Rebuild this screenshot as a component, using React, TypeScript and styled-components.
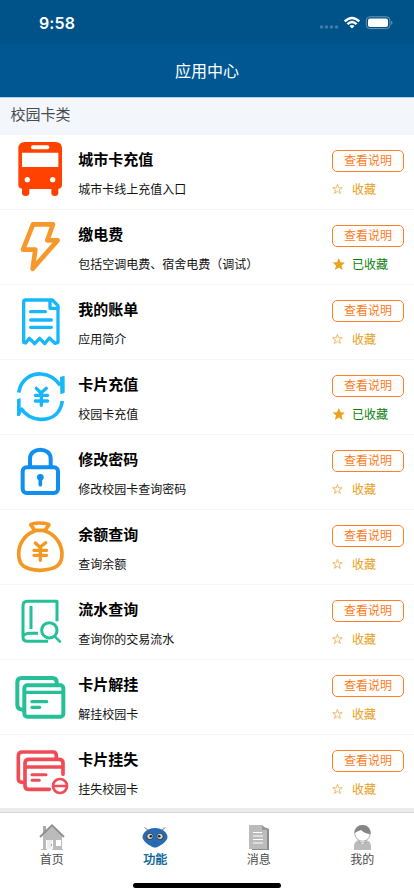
import React from 'react';
import styled, { createGlobalStyle } from 'styled-components';

const GlobalStyle = createGlobalStyle`
  * { box-sizing: border-box; }
  body { margin: 0; background: #fff; overflow: hidden; font-family: "Noto Sans CJK SC", sans-serif; }
`;

const Screen = styled.div`
  width: 414px;
  height: 896px;
  display: flex;
  flex-direction: column;
  overflow: hidden;
  background: #fff;
`;

const StatusBar = styled.div`
  height: 44px;
  flex: none;
  display: flex;
  justify-content: space-between;
  padding: 0 20px 0 39px;
  background: #005388;
`;

const Clock = styled.span`
  padding-top: 13px;
  font-family: Inter, sans-serif;
  font-size: 16px;
  line-height: 20px;
  font-weight: 600;
  letter-spacing: 0.1px;
  color: #fff;
`;

const StatusIcons = styled.svg`
  width: 78px;
  height: 44px;
`;

const Header = styled.header`
  height: 53px;
  flex: none;
  display: flex;
  align-items: center;
  justify-content: center;
  padding-bottom: 2px;
  background: #005792;
  color: #fff;
  font-size: 16px;
  font-weight: 400;
  line-height: 24px;
`;

const Section = styled.div`
  height: 38px;
  flex: none;
  padding: 5px 10.5px;
  border-top: 1px solid #b5cde0;
  background: #f3f7fb;
  color: #484b4e;
  font-size: 15px;
  line-height: 22px;
`;

const List = styled.main`
  height: 673px;
  flex: none;
  overflow: hidden;
`;

const Row = styled.div`
  height: 75px;
  display: flex;
  border-bottom: 1px solid #f5f5f5;
`;

const RowIcon = styled.svg`
  width: 70px;
  height: 75px;
  flex: none;
`;

const Info = styled.div`
  flex: 1;
  padding: 13px 0 0 8.2px;
`;

const Title = styled.div`
  font-size: 15px;
  line-height: 22px;
  font-weight: 700;
  color: #000;
`;

const Desc = styled.div`
  margin-top: 10px;
  font-size: 12px;
  line-height: 18px;
  color: #111;
`;

const Actions = styled.div`
  width: 82px;
  padding-top: 15px;
`;

const HelpButton = styled.button`
  display: block;
  width: 72px;
  height: 22px;
  padding: 0 0 2px;
  border: 1px solid #ff7f27;
  border-radius: 5px;
  background: #fff;
  color: #ff7a1c;
  font: inherit;
  font-size: 12px;
  line-height: 18px;
`;

const Favorite = styled.div<{ $on?: boolean }>`
  display: flex;
  align-items: center;
  gap: 7px;
  margin-top: 8px;
  font-size: 12px;
  line-height: 18px;
  color: ${(p) => (p.$on ? '#0a800a' : '#e8a020')};
`;

const Star = styled.svg`
  width: 13px;
  height: 13px;
`;

const TabBar = styled.nav`
  flex: none;
  height: 65px;
  display: flex;
  border-top: 4px solid #ebebeb;
`;

const Tab = styled.div<{ $active?: boolean }>`
  flex: 1;
  display: flex;
  flex-direction: column;
  align-items: center;
  padding-top: 10px;
  border-top: 1px solid #d5d5d5;
  font-size: 12px;
  line-height: 18px;
  -webkit-text-stroke: ${(p) => (p.$active ? '0.35px' : '0')};
  color: ${(p) => (p.$active ? '#005c96' : '#4a4a4a')};
`;

const TabIcon = styled.svg`
  width: 28px;
  height: 28px;
  margin-bottom: -1px;
`;

const HomeIndicator = styled.div`
  width: 148px;
  height: 5px;
  margin: 9.5px auto 0;
  border-radius: 3px;
  background: #000;
`;

type Kind = 'bus' | 'bolt' | 'bill' | 'cycle' | 'lock' | 'bag' | 'book' | 'cards' | 'lost';

const tints: Record<Kind, string> = {
  bus: '#ff4200', bolt: '#f7982a', bill: '#18b7fb', cycle: '#18b7fb', lock: '#118ff0',
  bag: '#f39823', book: '#25bf98', cards: '#25bf98', lost: '#f04c55',
};

const offsets: Record<Kind, number> = {
  bus: 15, bolt: 240, bill: 0, cycle: 225, lock: 0, bag: 225, book: 0, cards: 225, lost: 0,
};

const drawings: Record<Kind, React.ReactNode> = {
  bus: (
    <g stroke="none">
      <path fill="#ff4200" d="M75 36H167Q186 36 186 56V164Q186 175 175 176V189Q175 198 165 198Q154 198 154 189V177H88V189Q88 198 77 198Q66 198 66 189V176Q55 174 55 164V56Q55 36 75 36Z" />
      <rect x="93" y="46" width="55" height="12" rx="6" fill="#fff" />
      <rect x="66" y="68" width="109" height="43" rx="1" fill="#fff" />
      <circle cx="82" cy="149" r="8" fill="#fff" />
      <circle cx="158" cy="149" r="8" fill="#fff" />
    </g>
  ),
  bolt: <path strokeWidth="14" d="M99 283H159L142 331H173L98 416L106 359H69Z" />,
  bill: (
    <g strokeWidth="10">
      <path d="M71 172V51Q71 45 77 45H157L174 62V172L165 175L148 159L134 176L119 160L104 176L88 160L77 174Z" />
      <path d="M150 46V70H174" />
      <path strokeWidth="10" d="M92 80H136M92 105H154M92 127H154" />
    </g>
  ),
  cycle: (
    <g strokeWidth="10">
      <path strokeLinecap="butt" strokeWidth="11" d="M56 323C64 276 101 265 124 267C149 269 168 283 181 301M187 348C180 394 147 404 121 403C94 402 75 388 62 369" />
      <path fill="#18b7fb" strokeWidth="4" d="M182 277L192 275V322L183 325ZM53 344L60 342V370L65 376L58 391H53Z" />
      <path d="M109 310L123 324L139 310M124 326V361M106 331H143M106 348H143" />
    </g>
  ),
  lock: (
    <g strokeWidth="12">
      <rect x="68" y="97" width="106" height="77" rx="12" />
      <path d="M90 96V71C90 35 152 35 152 71V96" />
      <circle cx="121" cy="127" r="10" fill="#118ff0" stroke="none" />
      <path strokeWidth="11" d="M121 129V149" />
    </g>
  ),
  bag: (
    <g strokeWidth="11">
      <path d="M92 269Q92 264 119 264Q147 264 147 269L135 286H104Z" />
      <path d="M104 288C73 299 56 328 56 356C56 390 73 404 120 406C169 404 187 390 186 354C184 323 164 298 135 288" />
      <path strokeWidth="10" d="M106 324L120 337L137 323M121 338V376M102 346H140M102 361H140" />
    </g>
  ),
  book: (
    <g strokeWidth="9" strokeLinecap="butt">
      <path d="M171 109V49H82Q69 49 69 63V157Q69 169 83 169H144" />
      <path d="M93 63V132M70 152Q75 146 86 145H114" />
      <circle cx="148" cy="136" r="23" />
      <path strokeWidth="8" d="M164 154L182 172" />
    </g>
  ),
  cards: (
    <g strokeWidth="12">
      <path d="M170 296V292Q170 279 157 279H65Q52 279 52 292V360Q52 373 68 374" />
      <rect x="73" y="301" width="117" height="94" rx="9" />
      <path strokeWidth="10" d="M74 322H190M96 350H140M96 367H119" />
    </g>
  ),
  lost: (
    <g strokeWidth="11">
      <path d="M169 70V62Q169 51 159 51H67Q55 51 55 63V132Q55 142 68 142" />
      <path d="M189 118V84Q189 73 177 73H87Q75 73 75 85V152Q75 163 87 163H148M76 96H188" />
      <path strokeWidth="9" d="M96 119H138M96 136H118" />
      <circle cx="180" cy="153" r="21" strokeWidth="8" />
      <path strokeWidth="8" d="M162 153H198" />
    </g>
  ),
};

const items: { kind: Kind; title: string; desc: string; on?: boolean }[] = [
  { kind: 'bus', title: '城市卡充值', desc: '城市卡线上充值入口' },
  { kind: 'bolt', title: '缴电费', desc: '包括空调电费、宿舍电费（调试）', on: true },
  { kind: 'bill', title: '我的账单', desc: '应用简介' },
  { kind: 'cycle', title: '卡片充值', desc: '校园卡充值', on: true },
  { kind: 'lock', title: '修改密码', desc: '修改校园卡查询密码' },
  { kind: 'bag', title: '余额查询', desc: '查询余额' },
  { kind: 'book', title: '流水查询', desc: '查询你的交易流水' },
  { kind: 'cards', title: '卡片解挂', desc: '解挂校园卡' },
  { kind: 'lost', title: '卡片挂失', desc: '挂失校园卡' },
];

const StarIcon = ({ on }: { on?: boolean }) => (
  <Star viewBox="0 0 13 13">
    {on ? (
      <path fill="#eba21c" d="M6.8 0L8.6 4.3L13 4.6L9.6 7.6L10.7 12L6.8 9.6L2.9 12L4 7.6L.6 4.6L5 4.3Z" />
    ) : (
      <path fill="none" stroke="#eba63a" strokeWidth=".75" d="M5.4 1.4L6.6 4.8H10.2L7.3 6.9L8.4 10.4L5.4 8.3L2.4 10.4L3.5 6.9L.6 4.8H4.2Z" />
    )}
  </Star>
);

const tabs = [
  {
    label: '首页',
    icon: (
      <>
        <path fill="#bbb" d="M5 12L14 3L24 13V27H5Z" />
        <path fill="#aaa" d="M5 3H8V10H5Z" />
        <path fill="#fff" d="M8 17H15V27H8ZM18 17H23V23H18Z" />
        <path fill="#bcbcbc" d="M9 17H14V26H9Z" opacity=".25" />
        <circle cx="13.4" cy="22" r=".8" fill="#888" />
        <path stroke="#bbb" d="M3 26.5H9M14 26.5H25" />
        <path fill="none" stroke="#8c8c8c" strokeWidth="1.8" d="M2 14L14 2.2L26 14" />
      </>
    ),
  },
  {
    label: '功能',
    active: true,
    icon: (
      <>
        <path fill="none" stroke="#68717c" strokeWidth=".9" d="M7 7L3.5 4.5M21 7L24.5 4.5" />
        <path fill="#286bb4" d="M14 5C21 5 26.5 9.5 26.5 14C26.5 18 20 22.5 16.5 24Q14 25 11.5 24C8 22.5 1.5 18 1.5 14C1.5 9.5 7 5 14 5Z" />
        <circle cx="8.7" cy="13.4" r="3.5" fill="#41494b" />
        <circle cx="19.3" cy="13.4" r="3.5" fill="#41494b" />
        <circle cx="9" cy="13.3" r="2.6" fill="#d3d9ce" />
        <circle cx="19" cy="13.3" r="2.6" fill="#d3d9ce" />
        <circle cx="9.8" cy="13.3" r="1.3" fill="#222" />
        <circle cx="18.2" cy="13.3" r="1.3" fill="#222" />
        <circle cx="14" cy="19.7" r=".5" fill="#234e82" />
      </>
    ),
  },
  {
    label: '消息',
    icon: (
      <>
        <path fill="#8c8c8c" d="M17 3L24 6V27H7V24H20Z" />
        <path fill="#bbb" d="M4 2H17L22 7V26H4Z" />
        <path fill="#999" d="M17 2V7H22Z" />
        <path stroke="#fff" d="M8 9.5H17M8 13H18M8 16.5H18M8 20H18" />
      </>
    ),
  },
  {
    label: '我的',
    icon: (
      <>
        <path fill="#bbb" d="M6 27Q5 18 11 17H18Q24 18 23 27Z" />
        <path fill="#fff" d="M11 18L14.5 21L18 18Z" />
        <path fill="#aaa" d="M11 18L14.5 20L18 18V21L14.5 19L11 21Z" />
        <circle cx="14.5" cy="10.5" r="7.7" fill="#fff" stroke="#999" strokeWidth=".8" />
        <path fill="#858585" d="M6.5 10C6.5 5 10 2 14.5 2C19 2 23 5 22.6 11Q17 11 13 7Q10 8 6.5 10Z" />
      </>
    ),
  },
];

export default function App() {
  return (
    <Screen>
      <GlobalStyle />
      <StatusBar>
        <Clock>9:58</Clock>
        <StatusIcons viewBox="0 0 78 44">
          <g fill="#427ca5">
            <circle cx="5.5" cy="27" r="1.8" />
            <circle cx="10.5" cy="27" r="1.8" />
            <circle cx="15.5" cy="27" r="1.8" />
            <circle cx="20.5" cy="27" r="1.8" />
          </g>
          <g fill="none" stroke="#fff" strokeWidth="2.4">
            <path d="M28.7 21.4Q36 14.6 43.3 21.4" />
            <path d="M31.4 24.2Q36 19.9 40.6 24.2" />
          </g>
          <path fill="#fff" d="M33.5 26.1Q36 24 38.5 26.1L36 28.6Z" />
          <rect x="50.3" y="16.8" width="23.6" height="11.8" rx="3.5" fill="none" stroke="#7295b0" />
          <rect x="52" y="18.5" width="20" height="8.5" rx="2" fill="#fff" />
          <path fill="#7295b0" d="M75.2 20.8Q78 22.7 75.2 25Z" />
        </StatusIcons>
      </StatusBar>
      <Header>应用中心</Header>
      <Section>校园卡类</Section>
      <List>
        {items.map((item) => (
          <Row key={item.kind}>
            <RowIcon
              viewBox={`0 ${offsets[item.kind]} 210 225`}
              fill="none"
              stroke={tints[item.kind]}
              strokeLinecap="round"
              strokeLinejoin="round"
            >
              {drawings[item.kind]}
            </RowIcon>
            <Info>
              <Title>{item.title}</Title>
              <Desc>{item.desc}</Desc>
            </Info>
            <Actions>
              <HelpButton>查看说明</HelpButton>
              <Favorite $on={item.on}>
                <StarIcon on={item.on} />
                {item.on ? '已收藏' : '收藏'}
              </Favorite>
            </Actions>
          </Row>
        ))}
      </List>
      <TabBar>
        {tabs.map((tab) => (
          <Tab key={tab.label} $active={tab.active}>
            <TabIcon viewBox="0 0 28 28">{tab.icon}</TabIcon>
            {tab.label}
          </Tab>
        ))}
      </TabBar>
      <HomeIndicator />
    </Screen>
  );
}
